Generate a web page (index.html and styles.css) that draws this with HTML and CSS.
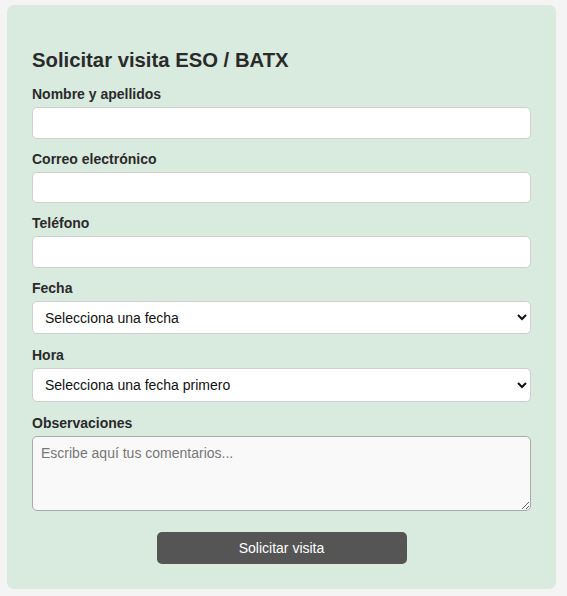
FILE: index.html
```html
<!DOCTYPE html>
<html lang="es">
<head>
<meta charset="utf-8">
<title>Solicitar visita</title>
<link rel="stylesheet" href="styles.css">
</head>
<body>
<form class="card">
  <h2 class="title">Solicitar visita ESO / BATX</h2>
  <label class="label" for="nombre">Nombre y apellidos</label>
  <input class="field" id="nombre" type="text">
  <label class="label" for="correo">Correo electrónico</label>
  <input class="field" id="correo" type="email">
  <label class="label" for="tel">Teléfono</label>
  <input class="field" id="tel" type="tel">
  <label class="label" for="fecha">Fecha</label>
  <select class="field select" id="fecha">
    <option>Selecciona una fecha</option>
  </select>
  <label class="label" for="hora">Hora</label>
  <select class="field select" id="hora">
    <option>Selecciona una fecha primero</option>
  </select>
  <label class="label" for="obs">Observaciones</label>
  <textarea class="area" id="obs" placeholder="Escribe aquí tus comentarios..."></textarea>
  <div class="actions">
    <button class="btn" type="button">Solicitar visita</button>
  </div>
</form>
</body>
</html>
```
FILE: styles.css
```css
html, body {
  background: #f4f4f4;
}
body {
  margin: 0;
  padding: 5px 11px 7px 7px;
  font-family: "Liberation Sans", Arial, sans-serif;
  color: #2a2a2a;
}
.card {
  box-sizing: border-box;
  width: 549px;
  height: 584px;
  background: #d9eadf;
  border-radius: 7px;
  padding: 25px;
  display: flex;
  flex-direction: column;
}
.title {
  margin: 17px 0 13px 0;
  font-size: 20.3px;
  line-height: 26px;
  font-weight: bold;
  color: #2a2a2a;
}
.label {
  display: block;
  font-size: 14px;
  line-height: 17px;
  font-weight: bold;
  color: #2a2a2a;
  margin: 0 0 4px 0;
}
.field {
  box-sizing: border-box;
  width: 499px;
  height: 32px;
  border: 1px solid #cfcfcf;
  border-radius: 5px;
  background: #fff;
  margin: 0 0 12px 0;
  padding: 0 12px;
  font-family: "Liberation Sans", Arial, sans-serif;
  font-size: 14px;
  color: #111;
}
.select {
  height: 34px;
  padding: 0 8px;
  margin-bottom: 13px;
}
.area {
  box-sizing: border-box;
  width: 499px;
  height: 76px;
  border: 1px solid #a8aaa8;
  border-radius: 5px;
  background: #f9f9f9;
  padding: 8px;
  margin: 0;
  font-family: "Liberation Sans", Arial, sans-serif;
  font-size: 14px;
  color: #222;
  resize: vertical;
}
.area::placeholder {
  color: #777;
}
.actions {
  display: flex;
  justify-content: center;
  margin-top: 21px;
}
.btn {
  width: 250px;
  height: 32px;
  border: 0;
  border-radius: 5px;
  background: #555;
  color: #fff;
  font-family: "Liberation Sans", Arial, sans-serif;
  font-size: 14px;
  cursor: pointer;
}
```
